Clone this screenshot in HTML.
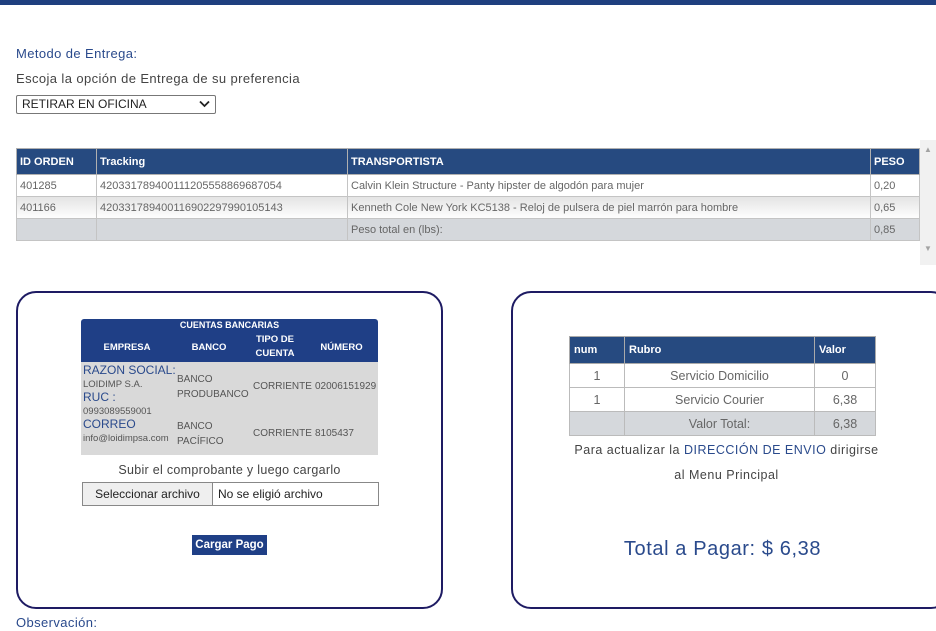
<!DOCTYPE html>
<html><head><meta charset="utf-8"><style>
*{box-sizing:border-box;margin:0;padding:0}
body{width:936px;height:631px;overflow:hidden;background:#fff;font-family:"Liberation Sans",sans-serif;position:relative}
.a{position:absolute}
.bar{left:0;top:0;width:936px;height:5px;background:#1f3f7f}
.lbl{color:#2a4a8c;font-size:13px;letter-spacing:0.4px}
table{border-collapse:collapse}
.t1{left:16px;top:148px;width:904px;font-size:11px;color:#666;font-family:"Liberation Sans Narrow","Liberation Sans",sans-serif}
.t1 th{background:#264a80;color:#fff;text-align:left;height:26px;padding-left:3px;border:1px solid #b0b0b0;font-size:11px}
.t1 td{height:22px;padding-left:3px;border:1px solid #c4c4c4}
.box{border:2px solid #1e1b63;border-radius:20px;top:291px;height:318px}
.bank{left:81px;top:319px;width:297px;font-size:9.5px;color:#555}
.t2{left:569px;top:336px;width:307px;font-size:12.5px;color:#666}
.t2 th{background:#264a80;color:#fff;text-align:left;height:27px;padding-left:4px;border:1px solid #aaa;font-size:11px}
.t2 td{height:24px;text-align:center;border:1px solid #bbb}
</style></head><body>
<div class="a bar"></div>
<div class="a lbl" style="left:16px;top:46px">Metodo de Entrega:</div>
<div class="a" style="left:16px;top:71px;font-size:13px;color:#444;letter-spacing:0.4px">Escoja la opción de Entrega de su preferencia</div>
<div class="a" style="left:16px;top:95px;width:200px;height:19px;border:1px solid #777;border-radius:2px;font-size:12px;color:#222;padding:1px 5px">RETIRAR EN OFICINA<svg style="position:absolute;right:5px;top:4px" width="11" height="8" viewBox="0 0 11 8"><path d="M1 1.5L5.5 6L10 1.5" fill="none" stroke="#222" stroke-width="1.8"/></svg></div>
<table class="a t1">
<tr><th style="width:80px">ID ORDEN</th><th style="width:251px">Tracking</th><th style="width:523px">TRANSPORTISTA</th><th>PESO</th></tr>
<tr><td>401285</td><td>420331789400111205558869687054</td><td>Calvin Klein Structure - Panty hipster de algodón para mujer</td><td>0,20</td></tr>
<tr style="background:linear-gradient(#e4e4e4,#fff)"><td>401166</td><td>420331789400116902297990105143</td><td>Kenneth Cole New York KC5138 - Reloj de pulsera de piel marrón para hombre</td><td>0,65</td></tr>
<tr style="background:#d5d8dc"><td></td><td></td><td>Peso total en (lbs):</td><td>0,85</td></tr>
</table>
<div class="a" style="left:920px;top:140px;width:16px;height:125px;background:#f1f1f1"><div style="color:#a3a3a3;font-size:8px;text-align:center;margin-top:5px">▲</div><div style="color:#a3a3a3;font-size:8px;text-align:center;margin-top:90px">▼</div></div>

<div class="a box" style="left:16px;width:427px"></div>
<div class="a box" style="left:511px;width:440px"></div>

<div class="a bank">
<div style="background:#1f3f86;color:#fff;font-weight:bold;font-size:9px;text-align:center;height:13px;line-height:13px;border-radius:3px 3px 0 0">CUENTAS BANCARIAS</div>
<div style="background:#1f3f86;color:#fff;font-weight:bold;font-size:9.5px;height:30px;display:flex;align-items:center;text-align:center">
<div style="width:92px">EMPRESA</div><div style="width:72px">BANCO</div><div style="width:60px;line-height:14px">TIPO DE CUENTA</div><div style="width:73px">NÚMERO</div></div>
<div style="background:#d9d9d9;height:93px;position:relative">
<div class="a" style="left:2px;top:2px;line-height:13px"><span style="color:#2a4a8c;font-size:12px">RAZON SOCIAL:</span><br>LOIDIMP S.A.<br><span style="color:#2a4a8c;font-size:12px">RUC :</span><br>0993089559001<br><span style="color:#2a4a8c;font-size:12px">CORREO</span><br>info@loidimpsa.com</div>
<div class="a" style="left:96px;top:10px;line-height:15px;font-size:10px">BANCO<br>PRODUBANCO</div>
<div class="a" style="left:172px;top:19px;font-size:10px">CORRIENTE</div>
<div class="a" style="left:234px;top:19px;font-size:10px">02006151929</div>
<div class="a" style="left:96px;top:57px;line-height:15px;font-size:10px">BANCO<br>PACÍFICO</div>
<div class="a" style="left:172px;top:66px;font-size:10px">CORRIENTE</div>
<div class="a" style="left:234px;top:66px;font-size:10px">8105437</div>
</div></div>
<div class="a" style="left:81px;top:463px;width:297px;text-align:center;font-size:12.5px;color:#444;letter-spacing:0.3px">Subir el comprobante y luego cargarlo</div>
<div class="a" style="left:82px;top:482px;width:297px;height:24px;border:1px solid #888;font-size:12px;color:#222;display:flex;align-items:center">
<div style="background:#efefef;border-right:1px solid #888;height:100%;width:130px;text-align:center;line-height:22px">Seleccionar archivo</div><div style="padding-left:5px">No se eligió archivo</div></div>
<div class="a" style="left:192px;top:535px;width:75px;height:20px;background:#1f3f86;color:#fff;font-weight:bold;font-size:11.5px;text-align:center;line-height:20px">Cargar Pago</div>

<table class="a t2">
<tr><th style="width:55px">num</th><th style="width:190px">Rubro</th><th>Valor</th></tr>
<tr><td>1</td><td>Servicio Domicilio</td><td>0</td></tr>
<tr><td>1</td><td>Servicio Courier</td><td>6,38</td></tr>
<tr style="background:#d5d8dc"><td></td><td>Valor Total:</td><td>6,38</td></tr>
</table>
<div class="a" style="left:560px;top:438px;width:333px;text-align:center;font-size:12.5px;color:#444;line-height:25px;letter-spacing:0.5px">Para actualizar la <span style="color:#2a4a8c">DIRECCIÓN DE ENVIO</span> dirigirse<br>al Menu Principal</div>
<div class="a" style="left:555px;top:538px;width:335px;text-align:center;font-size:20px;color:#2a4a8c;letter-spacing:0.6px">Total a Pagar: $ 6,38</div>
<div class="a lbl" style="left:16px;top:615px">Observación:</div>
</body></html>
